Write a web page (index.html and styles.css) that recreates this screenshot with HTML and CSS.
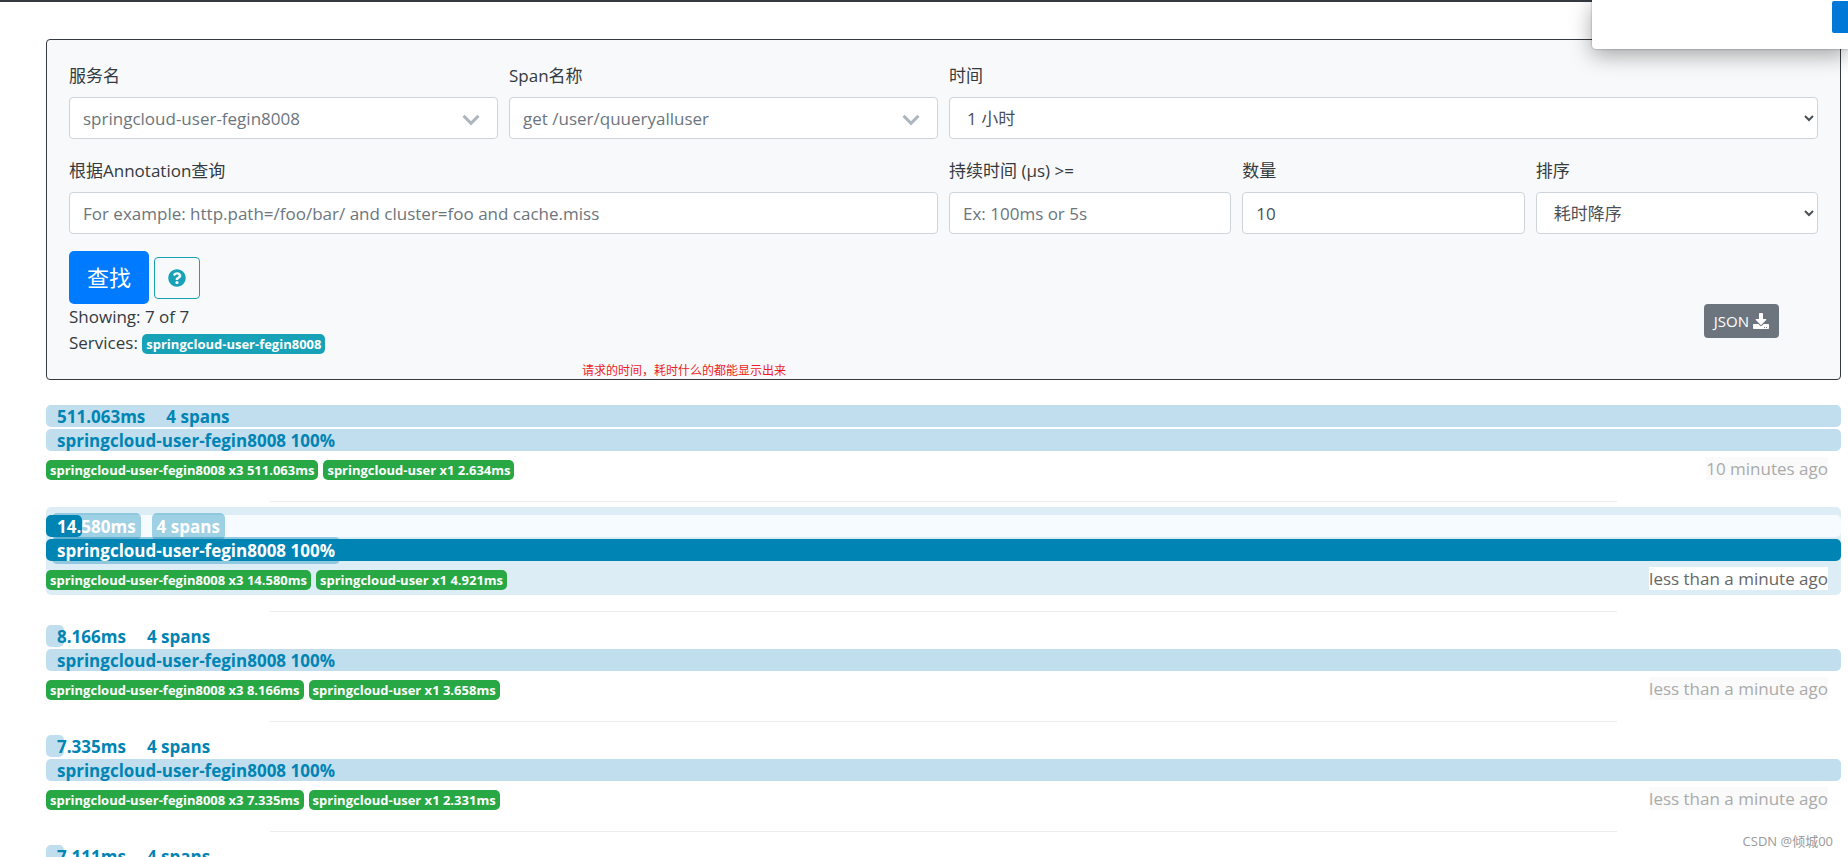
FILE: index.html
```html
<!DOCTYPE html>
<html lang="zh-CN">
<head>
<meta charset="utf-8">
<meta name="viewport" content="width=device-width, initial-scale=1">
<title>Zipkin</title>
<link rel="stylesheet" href="styles.css">
</head>
<body>
<header class="topbar"></header>
<aside class="popup"><button class="popup-action" type="button" aria-label="OK"></button></aside>

<main class="page">
  <form class="panel">
    <div class="fields">
      <div class="field">
        <label for="service">服务名</label>
        <div class="combo">
          <select id="service" class="control combo-select"><option>springcloud-user-fegin8008</option></select>
          <svg class="combo-arrow" viewBox="0 0 18 12" aria-hidden="true"><path d="M1.5 1.8 9 9.4l7.500-7.600" fill="none" stroke="currentColor" stroke-width="3"/></svg>
        </div>
      </div>
      <div class="field">
        <label for="span">Span名称</label>
        <div class="combo">
          <select id="span" class="control combo-select"><option>get /user/quueryalluser</option></select>
          <svg class="combo-arrow" viewBox="0 0 18 12" aria-hidden="true"><path d="M1.5 1.8 9 9.4l7.500-7.600" fill="none" stroke="currentColor" stroke-width="3"/></svg>
        </div>
      </div>
      <div class="field field-half">
        <label for="lookback">时间</label>
        <select id="lookback" class="control"><option>1 小时</option></select>
      </div>
      <div class="field field-half">
        <label for="annotation">根据Annotation查询</label>
        <input id="annotation" class="control" type="text" placeholder="For example: http.path=/foo/bar/ and cluster=foo and cache.miss">
      </div>
      <div class="field field-sixth">
        <label for="duration">持续时间 (μs) &gt;=</label>
        <input id="duration" class="control" type="text" placeholder="Ex: 100ms or 5s">
      </div>
      <div class="field field-sixth">
        <label for="limit">数量</label>
        <input id="limit" class="control" type="text" value="10">
      </div>
      <div class="field field-sixth">
        <label for="sort">排序</label>
        <select id="sort" class="control"><option>耗时降序</option></select>
      </div>
    </div>

    <div class="actions">
      <button class="btn btn-primary" type="button">查找</button>
      <button class="btn btn-help" type="button" aria-label="Help">
        <svg class="icon-help" viewBox="0 0 512 512" aria-hidden="true"><path fill="currentColor" d="M504 256c0 136.997-111.043 248-248 248S8 392.997 8 256C8 119.083 119.043 8 256 8s248 111.083 248 248zM262.655 90c-54.497 0-89.255 22.957-116.549 63.758-3.536 5.286-2.353 12.415 2.715 16.258l34.699 26.310c5.205 3.947 12.621 3.008 16.665-2.122 17.864-22.658 30.113-35.797 57.303-35.797 20.429 0 45.698 13.148 45.698 32.958 0 14.976-12.363 22.667-32.534 33.976C247.128 238.528 216 254.941 216 296v4c0 6.627 5.373 12 12 12h56c6.627 0 12-5.373 12-12v-1.333c0-28.462 83.186-29.647 83.186-106.667 0-58.002-60.165-102-116.531-102zM256 338c-25.365 0-46 20.635-46 46 0 25.364 20.635 46 46 46s46-20.636 46-46c0-25.365-20.635-46-46-46z"/></svg>
      </button>
    </div>

    <div class="summary">
      <div>
        <div class="line">Showing: 7 of 7</div>
        <div class="line">Services: <span class="badge badge-info">springcloud-user-fegin8008</span></div>
      </div>
      <button class="btn btn-json" type="button">JSON
        <svg class="icon-download" viewBox="0 0 512 512" aria-hidden="true"><path fill="currentColor" d="M216 0h80c13.300 0 24 10.700 24 24v168h87.700c17.800 0 26.700 21.500 14.100 34.100L269.700 378.300c-7.500 7.500-19.800 7.500-27.300 0L90.100 226.100c-12.600-12.600-3.700-34.100 14.100-34.100H192V24c0-13.300 10.700-24 24-24zm296 376v112c0 13.300-10.700 24-24 24H24c-13.300 0-24-10.700-24-24V376c0-13.300 10.700-24 24-24h146.700l49 49c20.100 20.100 52.500 20.100 72.600 0l49-49H488c13.300 0 24 10.700 24 24zm-124 88c0-11-9-20-20-20s-20 9-20 20 9 20 20 20 20-9 20-20zm64 0c0-11-9-20-20-20s-20 9-20 20 9 20 20 20 20-9 20-20z"/></svg>
      </button>
    </div>
    <p class="note">请求的时间，耗时什么的都能显示出来</p>
  </form>

  <ul class="traces">
    <li class="trace">
      <div class="bar"><div class="fill" style="width:100%"></div><span class="tag">511.063ms</span><span class="tag">4 spans</span></div>
      <div class="bar"><div class="fill" style="width:100%"></div><span class="tag">springcloud-user-fegin8008 100%</span></div>
      <div class="meta"><span class="badge">springcloud-user-fegin8008 x3 511.063ms</span><span class="badge">springcloud-user x1 2.634ms</span><time class="ago">10 minutes ago</time></div>
    </li>
    <li class="trace trace-active">
      <div class="bar"><div class="fill" style="width:2%"></div><span class="tag">14.580ms</span><span class="tag">4 spans</span></div>
      <div class="bar"><div class="fill" style="width:100%"></div><span class="tag">springcloud-user-fegin8008 100%</span></div>
      <div class="meta"><span class="badge">springcloud-user-fegin8008 x3 14.580ms</span><span class="badge">springcloud-user x1 4.921ms</span><time class="ago">less than a minute ago</time></div>
    </li>
    <li class="trace">
      <div class="bar"><div class="fill" style="width:1%"></div><span class="tag">8.166ms</span><span class="tag">4 spans</span></div>
      <div class="bar"><div class="fill" style="width:100%"></div><span class="tag">springcloud-user-fegin8008 100%</span></div>
      <div class="meta"><span class="badge">springcloud-user-fegin8008 x3 8.166ms</span><span class="badge">springcloud-user x1 3.658ms</span><time class="ago">less than a minute ago</time></div>
    </li>
    <li class="trace">
      <div class="bar"><div class="fill" style="width:1%"></div><span class="tag">7.335ms</span><span class="tag">4 spans</span></div>
      <div class="bar"><div class="fill" style="width:100%"></div><span class="tag">springcloud-user-fegin8008 100%</span></div>
      <div class="meta"><span class="badge">springcloud-user-fegin8008 x3 7.335ms</span><span class="badge">springcloud-user x1 2.331ms</span><time class="ago">less than a minute ago</time></div>
    </li>
    <li class="trace">
      <div class="bar"><div class="fill" style="width:1%"></div><span class="tag">7.111ms</span><span class="tag">4 spans</span></div>
    </li>
  </ul>
</main>
<div class="watermark">CSDN @倾城00</div>
</body>
</html>
```
FILE: styles.css
```css
*,
*::before,
*::after {
  box-sizing: border-box;
}

body {
  margin: 0;
  height: 100vh;
  overflow: hidden;
  background: #fff;
  color: #343a40;
  font: 17px/27px "Open Sans", "Noto Sans CJK SC", sans-serif;
}

.topbar {
  height: 2px;
  background: #343a40;
}

.popup {
  position: absolute;
  z-index: 2;
  top: 0;
  right: 0;
  display: flex;
  justify-content: flex-end;
  width: 256px;
  height: 49px;
  padding-top: 1px;
  background: #fff;
  border-radius: 0 0 0 4px;
  box-shadow: 0 6px 22px rgba(0, 0, 0, 0.35), 0 0 2px rgba(0, 0, 0, 0.4);
}

.popup-action {
  width: 16px;
  height: 32px;
  padding: 0;
  border: 0;
  border-radius: 2px 0 0 2px;
  background: #0078d7;
}

.page {
  padding: 37px 7px 0 46px;
}

.panel {
  position: relative;
  padding: 22px 22px 23px;
  border: 1px solid #343a40;
  border-radius: 4px;
  background: #f8f9fa;
}

.fields {
  display: grid;
  grid-template-columns: repeat(12, minmax(0, 1fr));
  gap: 18px 11px;
  margin-bottom: 17px;
}

.field {
  grid-column: span 3;
}

.field-half {
  grid-column: span 6;
}

.field-sixth {
  grid-column: span 2;
}

.field label {
  display: block;
  margin-bottom: 8px;
}

.control {
  display: block;
  width: 100%;
  height: 42px;
  padding: 1px 13px 0;
  border: 1px solid #ced4da;
  border-radius: 4px;
  background: #fff;
  color: #495057;
  font: inherit;
}

.control::placeholder {
  color: #6c757d;
  opacity: 1;
}

.combo {
  position: relative;
}

.combo-select {
  appearance: none;
  color: #6c757d;
}

.combo-arrow {
  position: absolute;
  top: 17px;
  right: 18px;
  width: 18px;
  height: 12px;
  color: #adb5bd;
  pointer-events: none;
}

.actions {
  display: flex;
  align-items: center;
  gap: 5px;
}

.btn {
  display: inline-flex;
  align-items: center;
  justify-content: center;
  border: 1px solid transparent;
  border-radius: 4px;
  font: inherit;
}

.btn-primary {
  height: 53px;
  padding: 0 17px;
  border-radius: 5px;
  background: #007bff;
  color: #fff;
  font-size: 22px;
}

.btn-help {
  width: 46px;
  height: 42px;
  padding: 0;
  border-color: #17a2b8;
  background: transparent;
  color: #17a2b8;
}

.icon-help {
  width: 18px;
  height: 18px;
}

.summary {
  display: flex;
  align-items: flex-start;
  justify-content: space-between;
  padding-right: 39px;
}

.line {
  line-height: 26px;
}

.badge {
  display: inline-block;
  height: 20px;
  padding: 0 4px;
  border-radius: 5px;
  background: #28a745;
  color: #fff;
  font-size: 13px;
  font-weight: 700;
  line-height: 20px;
  white-space: nowrap;
}

.badge-info {
  background: #17a2b8;
}

.btn-json {
  gap: 4px;
  height: 34px;
  padding: 0 9px;
  background: #6c757d;
  color: #fff;
  font-size: 15px;
}

.icon-download {
  width: 16px;
  height: 16px;
}

.note {
  position: absolute;
  bottom: 0;
  left: 535px;
  margin: 0;
  color: #ed1c24;
  font-size: 12px;
  line-height: 16px;
}

.traces {
  margin: 17px 0 0;
  padding: 0;
  list-style: none;
}

.trace {
  position: relative;
  height: 88px;
  margin-bottom: 22px;
  padding-top: 8px;
  border-radius: 5px;
}

/* separator between two traces */
.trace:not(:last-child)::after {
  content: "";
  position: absolute;
  top: 104px;
  left: 12.5%;
  width: 75%;
  height: 1px;
  background: #ececec;
}

.bar {
  position: relative;
  display: flex;
  align-items: center;
  gap: 11px;
  height: 22px;
  margin-bottom: 2px;
  padding-left: 6px;
  border-radius: 5px;
}

.fill {
  position: absolute;
  top: 0;
  left: 0;
  height: 100%;
  border-radius: 5px;
  background: #c0deee;
}

.tag {
  position: relative;
  flex: none;
  padding: 0 5px;
  border-radius: 5px;
  color: #0084b4;
  font-weight: 700;
}

.meta {
  display: flex;
  align-items: flex-end;
  gap: 5px;
  height: 27px;
  padding-right: 13px;
}

.ago {
  margin-left: auto;
  background: #fafafa;
  color: #aaa;
  line-height: 23px;
}

.trace-active {
  background: #dcedf6;
}

.trace-active .bar {
  background: #f5fbfe;
}

.trace-active .fill {
  background: #0084b4;
}

.trace-active .tag {
  background: rgba(0, 132, 180, 0.35);
  color: #fff;
}

.trace-active .ago {
  background: #fff;
  color: #666;
}

.watermark {
  position: absolute;
  right: 15px;
  bottom: 6px;
  color: #999;
  font-size: 13px;
  line-height: 20px;
}
```
